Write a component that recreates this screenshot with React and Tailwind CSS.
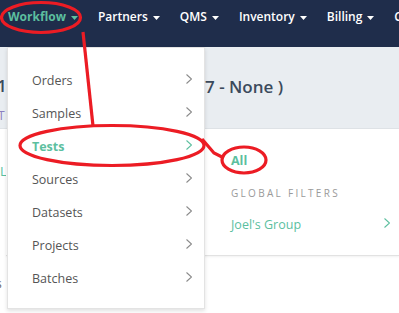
import React from 'react';

const navItems = ['Workflow', 'Partners', 'QMS', 'Inventory', 'Billing', 'Clients'];
const menuItems = ['Orders', 'Samples', 'Tests', 'Sources', 'Datasets', 'Projects', 'Batches'];

function Caret({ color }) {
    return (
        <svg width="7" height="4" viewBox="0 0 7 4" className="ml-[5px] mt-[1px]">
            <path d="M0 0 L7 0 L3.5 4 Z" fill={color} />
        </svg>
    );
}

function Chevron({ color = '#8a8a8a' }) {
    return (
        <svg width="6" height="10" viewBox="0 0 6 10">
            <path d="M0.5 0.5 L5.5 5 L0.5 9.5" fill="none" stroke={color} strokeWidth="1.1" />
        </svg>
    );
}

export default function App() {
    return (
        <div className="relative w-[399px] h-[313px] overflow-hidden bg-white" style={{ fontFamily: '"Open Sans", "Liberation Sans", sans-serif' }}>
            {/* Top nav */}
            <nav className="h-[47px] bg-[#1f2d4b] flex items-start pl-[8px] gap-[20px] whitespace-nowrap overflow-hidden">
                {navItems.map((n, i) => (
                    <div key={n} className={`h-[34px] flex items-center text-[12px] ${i === 0 ? 'font-bold text-[#5cbf9f]' : 'font-semibold text-white'}`}>
                        {n}
                        {i < 5 && <Caret color={i === 0 ? '#5cbf9f' : '#ffffff'} />}
                    </div>
                ))}
            </nav>

            {/* Page behind the menu */}
            <div className="flex">
                {/* left column, mostly covered */}
                <div className="w-[6px] shrink-0 overflow-hidden whitespace-nowrap">
                    <div className="h-[82px] bg-[#e9edf1] border-b border-[#dfe3e7] pt-[28px] flex flex-col">
                        <span className="-ml-[3px] text-[17px] font-semibold text-[#3b4a5c] leading-[22px]">1:</span>
                        <span className="-ml-[2px] mt-[11px] text-[12px] text-[#8c7fc0] leading-[16px]">T</span>
                    </div>
                    <div className="flex flex-col pt-[33px]">
                        <span className="text-[13px] text-[#5cbf9f] leading-[18px]">L</span>
                        <span className="-ml-[4px] mt-[96px] text-[12px] text-[#666] leading-[16px]">s</span>
                    </div>
                </div>

                {/* main column */}
                <div className="flex-1 flex flex-col">
                    <div className="h-[82px] bg-[#e9edf1] border-b border-[#dfe3e7] pl-[199px] pt-[29px]">
                        <h1 className="text-[17px] font-semibold text-[#3b4a5c] leading-[22px] whitespace-nowrap">7 - None )</h1>
                    </div>
                    <div className="h-[127px] bg-white border-b border-[#e2e2e2] shadow-[0_1px_2px_rgba(0,0,0,0.06)] pl-[225px] pr-[9px] pt-[23px]">
                        <div className="text-[12.5px] font-bold text-[#5cbf9f] leading-[18px]">All</div>
                        <div className="mt-[16px] text-[10px] tracking-[2.3px] text-[#9a9a9a] leading-[14px]">GLOBAL FILTERS</div>
                        <div className="mt-[16px] flex items-center justify-between text-[12.5px] text-[#5cbf9f] leading-[18px]">
                            <span>Joel's Group</span>
                            <span className="-mt-[4px]"><Chevron color="#5cbf9f" /></span>
                        </div>
                    </div>
                </div>
            </div>

            {/* Dropdown */}
            <div className="absolute left-[7px] top-[47px] w-[198px] h-[262px] bg-white border border-[#e3e3e3] shadow-[0_2px_4px_rgba(0,0,0,0.12)] pt-[17px]">
                {menuItems.map((m) => (
                    <div key={m} className="h-[33px] flex items-center justify-between pl-[24px] pr-[12px]">
                        <span className={`text-[12.5px] ${m === 'Tests' ? 'font-bold text-[#5cbf9f]' : 'text-[#555555]'}`}>{m}</span>
                        <span className="-mt-[6px]"><Chevron color={m === 'Tests' ? '#5cbf9f' : '#8a8a8a'} /></span>
                    </div>
                ))}
            </div>

            {/* Red annotations */}
            <svg className="absolute inset-0 pointer-events-none" width="399" height="313" viewBox="0 0 399 313">
                <g fill="none" stroke="#ec1c24" strokeWidth="3.2">
                    <ellipse cx="41" cy="17.5" rx="39.5" ry="15" />
                    <path d="M83 32 L93 126" />
                    <ellipse cx="112" cy="145.5" rx="92" ry="20" />
                    <path d="M202 139 L214 153 L224 158" />
                    <ellipse cx="244" cy="160" rx="22" ry="13" />
                </g>
            </svg>
        </div>
    );
}
